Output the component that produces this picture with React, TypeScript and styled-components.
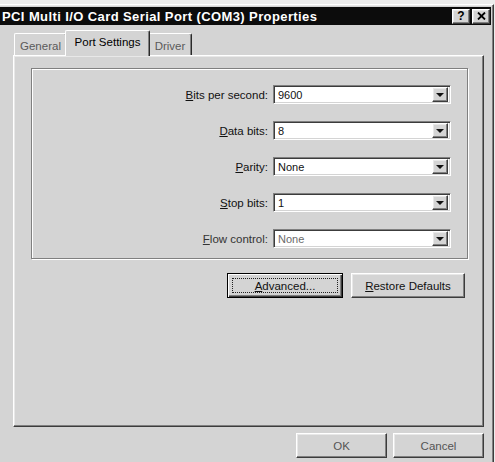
import React from 'react';
import styled, { createGlobalStyle, css } from 'styled-components';

const GlobalStyle = createGlobalStyle`
  html, body {
    margin: 0;
    padding: 0;
  }
  body {
    width: 495px;
    height: 462px;
    overflow: hidden;
    background: #ececec;
    font-family: "Liberation Sans", Arial, sans-serif;
    color: #111;
  }
`;

const face = '#d4d4d4';

const raised = css`
  border: 1px solid;
  border-color: #ffffff #3c3c3c #3c3c3c #ffffff;
  box-shadow: inset -1px -1px 0 #808080, inset 1px 1px 0 #e8e8e8;
`;

const sunken = css`
  border: 1px solid;
  border-color: #808080 #ffffff #ffffff #808080;
  box-shadow: inset 1px 1px 0 #3c3c3c, inset -1px -1px 0 #d4d4d4;
`;

const Dialog = styled.div`
  box-sizing: border-box;
  width: 497px;
  height: 470px;
  margin: 4px 0 0 -3px;
  padding: 2px;
  background: ${face};
  ${raised};
`;

const TitleBar = styled.div`
  display: flex;
  align-items: center;
  height: 18px;
  padding: 0 1px 0 2px;
  background: #0c0c0c;
  color: #fff;
  font-weight: bold;
  font-size: 13px;
  letter-spacing: 0.4px;
`;

const TitleText = styled.span`
  flex: 1;
  white-space: nowrap;
`;

const CaptionButton = styled.div`
  box-sizing: border-box;
  width: 18px;
  height: 15px;
  margin-left: 2px;
  display: flex;
  align-items: center;
  justify-content: center;
  background: ${face};
  color: #000;
  font-size: 12px;
  font-weight: bold;
  letter-spacing: 0;
  ${raised};
`;

const Body = styled.div`
  padding: 5px 7px 0 13px;
`;

const TabStrip = styled.div`
  display: flex;
  align-items: flex-end;
  height: 25px;
  padding-left: 1px;
  font-size: 11.5px;
`;

const Tab = styled.div<{ $w: number; $active?: boolean }>`
  box-sizing: border-box;
  width: ${(p) => p.$w}px;
  height: ${(p) => (p.$active ? 26 : 22)}px;
  margin: ${(p) => (p.$active ? '0 -2px -1px' : '0')};
  position: relative;
  z-index: ${(p) => (p.$active ? 1 : 0)};
  display: flex;
  justify-content: center;
  padding-top: ${(p) => (p.$active ? 5 : 6)}px;
  background: ${face};
  color: ${(p) => (p.$active ? '#000' : '#5a5a5a')};
  border: 1px solid;
  border-bottom: none;
  border-color: #ffffff #2a2a2a #2a2a2a #ffffff;
  border-radius: 2px 2px 0 0;
  box-shadow: inset -1px 0 0 #808080;
  white-space: nowrap;
`;

const Panel = styled.div`
  box-sizing: border-box;
  height: 372px;
  padding: 12px 15px 0 17px;
  background: ${face};
  ${raised};
`;

const GroupBox = styled.div`
  box-sizing: border-box;
  height: 191px;
  padding: 16px 16px 0 0;
  border: 1px solid #808080;
  box-shadow: 1px 1px 0 #ffffff, inset 1px 1px 0 #ffffff;
  display: grid;
  grid-template-columns: 1fr 178px;
  grid-auto-rows: 19px;
  row-gap: 17px;
  column-gap: 5px;
  align-items: center;
`;

const Label = styled.label<{ $muted?: boolean }>`
  justify-self: end;
  font-size: 11.5px;
  color: ${(p) => (p.$muted ? '#333' : '#111')};
  white-space: nowrap;
`;

const Combo = styled.div<{ $muted?: boolean }>`
  box-sizing: border-box;
  height: 19px;
  display: flex;
  align-items: center;
  background: #fff;
  font-size: 11px;
  color: ${(p) => (p.$muted ? '#6a6a6a' : '#111')};
  padding: 2px 2px 2px 4px;
  ${sunken};
`;

const ComboValue = styled.span`
  flex: 1;
`;

const DropButton = styled.div`
  box-sizing: border-box;
  width: 16px;
  height: 15px;
  display: flex;
  align-items: center;
  justify-content: center;
  background: ${face};
  ${raised};
`;

const Arrow = styled.span`
  width: 0;
  height: 0;
  border-left: 4px solid transparent;
  border-right: 4px solid transparent;
  border-top: 4px solid #111;
`;

const ButtonRow = styled.div<{ $gap: number }>`
  display: flex;
  justify-content: flex-end;
  gap: ${(p) => p.$gap}px;
`;

const PanelButtons = styled(ButtonRow)`
  margin: 14px 3px 0 0;
`;

const DialogButtons = styled(ButtonRow)`
  margin-top: 6px;
`;

const Button = styled.div<{ $w: number; $default?: boolean; $muted?: boolean }>`
  box-sizing: border-box;
  width: ${(p) => p.$w}px;
  height: 25px;
  display: flex;
  align-items: center;
  justify-content: center;
  font-size: 11.5px;
  color: ${(p) => (p.$muted ? '#555' : '#111')};
  background: ${face};
  ${(p) =>
    p.$default
      ? css`
          border: 1px solid #000;
          box-shadow: inset 1px 1px 0 #ffffff, inset -1px -1px 0 #3c3c3c, inset -2px -2px 0 #808080;
        `
      : raised};
`;

const FocusRing = styled.span`
  box-sizing: border-box;
  width: calc(100% - 8px);
  height: calc(100% - 8px);
  display: flex;
  align-items: center;
  justify-content: center;
  border: 1px dotted #222;
`;

const fields = [
  { key: 'B', rest: 'its per second:', value: '9600' },
  { key: 'D', rest: 'ata bits:', value: '8' },
  { key: 'P', rest: 'arity:', value: 'None' },
  { key: 'S', rest: 'top bits:', value: '1' },
  { key: 'F', rest: 'low control:', value: 'None', muted: true },
];

export default function App() {
  return (
    <>
      <GlobalStyle />
      <Dialog>
        <TitleBar>
          <TitleText>PCI Multi I/O Card Serial Port (COM3) Properties</TitleText>
          <CaptionButton>?</CaptionButton>
          <CaptionButton>
            <svg width="9" height="8" viewBox="0 0 9 8">
              <path d="M1 0.5 L8 7.5 M8 0.5 L1 7.5" stroke="#000" strokeWidth="1.8" />
            </svg>
          </CaptionButton>
        </TitleBar>
        <Body>
          <TabStrip>
            <Tab $w={53}>General</Tab>
            <Tab $w={85} $active>Port Settings</Tab>
            <Tab $w={44}>Driver</Tab>
          </TabStrip>
          <Panel>
            <GroupBox>
              {fields.map((f) => (
                <React.Fragment key={f.key}>
                  <Label $muted={f.muted}>
                    <u>{f.key}</u>
                    {f.rest}
                  </Label>
                  <Combo $muted={f.muted}>
                    <ComboValue>{f.value}</ComboValue>
                    <DropButton>
                      <Arrow />
                    </DropButton>
                  </Combo>
                </React.Fragment>
              ))}
            </GroupBox>
            <PanelButtons $gap={8}>
              <Button $w={116} $default>
                <FocusRing>
                  <u>A</u>dvanced...
                </FocusRing>
              </Button>
              <Button $w={114}>
                <u>R</u>estore Defaults
              </Button>
            </PanelButtons>
          </Panel>
          <DialogButtons $gap={6}>
            <Button $w={91} $muted>OK</Button>
            <Button $w={91} $muted>Cancel</Button>
          </DialogButtons>
        </Body>
      </Dialog>
    </>
  );
}
